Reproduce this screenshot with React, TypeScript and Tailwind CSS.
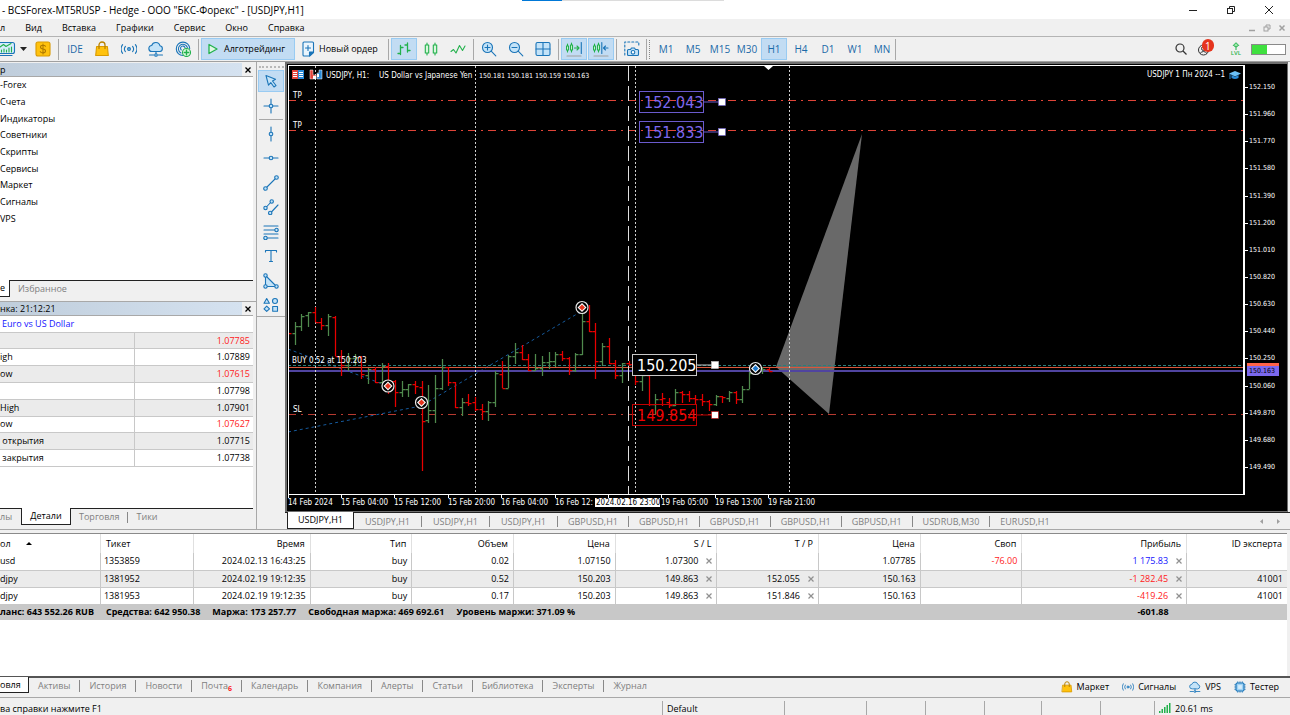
import React from "react";

type IconProps = { children: React.ReactNode; size?: "sm" | "md" };

const blue = "#1b75b8";
const green = "#22b14c";

function Icon({ children, size = "md" }: IconProps) {
  return (
    <svg
      viewBox="0 0 16 16"
      className={size === "md" ? "h-4 w-4 shrink-0" : "h-3 w-3 shrink-0"}
      fill="none"
      stroke={blue}
      strokeWidth="1.1"
      strokeLinecap="round"
      strokeLinejoin="round"
      aria-hidden="true"
    >
      {children}
    </svg>
  );
}

const BagIcon = ({ size }: { size?: "sm" | "md" }) => (
  <Icon size={size}>
    <path d="M2.6 5.5h10.8l.9 9H1.7z" fill="#ffc20e" stroke="#d99a00" />
    <path d="M5 7.5V4a3 3 0 0 1 6 0v3.5" stroke="#b98200" strokeWidth="1.3" />
  </Icon>
);

const SignalIcon = ({ size }: { size?: "sm" | "md" }) => (
  <Icon size={size}>
    <circle cx="8" cy="8" r="1.4" fill="#8fc8f0" />
    <path d="M4.4 5.4a4.2 4.2 0 0 0 0 5.2M11.6 5.4a4.2 4.2 0 0 1 0 5.2M1.600 3.700a7.200 7.200 0 0 0 0 8.600M14.400 3.700a7.200 7.200 0 0 1 0 8.600" />
  </Icon>
);

const CloudIcon = ({ size }: { size?: "sm" | "md" }) => (
  <Icon size={size}>
    <path
      d="M4 10.500a3 3 0 0 1-.3-6A4.300 4.300 0 0 1 12 4.800a2.900 2.900 0 0 1 0 5.700z"
      fill="#c4e3f8"
    />
    <path d="M8 10.500v2M1.500 14h4.300M10.200 14h4.300" />
    <circle cx="8" cy="14" r="1.300" fill="#c4e3f8" />
  </Icon>
);

const ChipIcon = () => (
  <Icon size="sm">
    <path d="M5 1v14M8 1v14M11 1v14M1 5h14M1 8h14M1 11h14" />
    <rect x="2.700" y="2.700" width="10.600" height="10.600" rx="1.500" fill="#9ed2f5" strokeWidth="1.500" />
    <rect x="5.500" y="5.500" width="5" height="5" fill="#d5ecfb" stroke="none" />
  </Icon>
);

function ToolButton({
  label,
  active,
  children,
}: {
  label: string;
  active?: boolean;
  children: React.ReactNode;
}) {
  return (
    <button
      aria-label={label}
      className={
        active
          ? "mr-px flex h-[22px] w-[26px] shrink-0 items-center justify-center border border-[#99cbf2] bg-[#c2dcf3]"
          : "mr-px flex h-[22px] w-[26px] shrink-0 items-center justify-center"
      }
    >
      {children}
    </button>
  );
}

const Sep = () => <span className="h-[21px] w-px shrink-0 bg-[#a8a8a8]" />;

const GroupSep = () => (
  <span className="mr-[2px] ml-px flex">
    <Sep />
  </span>
);

function TitleBar() {
  return (
    <header className="relative flex h-[19px] items-center justify-between bg-white pl-[2px] pr-4">
      <h1 className="text-[10px] leading-4 whitespace-pre">
        - BCSForex-MT5RUSP - Hedge - ООО "БКС-Форекс" - [USDJPY,H1]
      </h1>
      <div className="absolute top-0 left-[522px] flex">
        <span className="h-px w-[40px] bg-[#0078d7]" />
        <span className="h-px w-[162px] bg-[#dcdcdc]" />
      </div>
      <div className="flex items-center gap-7">
        <button aria-label="Свернуть">
          <svg className="h-[10px] w-[10px]" viewBox="0 0 10 10" stroke="#222" aria-hidden="true">
            <path d="M1 5.500h8" />
          </svg>
        </button>
        <button aria-label="Развернуть">
          <svg className="h-[10px] w-[10px]" viewBox="0 0 10 10" stroke="#222" fill="none" aria-hidden="true">
            <rect x="1.500" y="3.500" width="5" height="5" />
            <path d="M3.500 3.500v-2h5v5h-2" />
          </svg>
        </button>
        <button aria-label="Закрыть">
          <svg className="h-[10px] w-[10px]" viewBox="0 0 10 10" stroke="#222" aria-hidden="true">
            <path d="M1 1l8 8M9 1l-8 8" />
          </svg>
        </button>
      </div>
    </header>
  );
}

function MenuBar() {
  const items = ["Вид", "Вставка", "Графики", "Сервис", "Окно", "Справка"];
  return (
    <nav className="flex h-[18px] items-center justify-between border-b border-[#b4b4b4] pr-1">
      <div className="flex items-center gap-5">
        <button>л</button>
        {items.map((t) => (
          <button key={t}>{t}</button>
        ))}
      </div>
      <div className="flex items-center gap-[7px] text-[#a0a0a0]">
        <svg className="h-2 w-2" viewBox="0 0 8 8" stroke="currentColor" aria-hidden="true">
          <path d="M1 6.500h6" strokeWidth="1.500" />
        </svg>
        <svg className="h-2 w-2" viewBox="0 0 8 8" stroke="currentColor" fill="none" aria-hidden="true">
          <rect x="1" y="3" width="4" height="4" />
          <path d="M3 3V1h4v4H5" />
        </svg>
        <svg className="h-2 w-2" viewBox="0 0 8 8" stroke="currentColor" aria-hidden="true">
          <path d="M1.500 1.500l5 5M6.500 1.500l-5 5" strokeWidth="1.500" />
        </svg>
      </div>
    </nav>
  );
}

function Toolbar() {
  const frames = ["M1", "M5", "M15", "M30", "H1", "H4", "D1", "W1", "MN"];
  return (
    <div className="flex h-[25px] items-center border-b border-[#a0a0a0]">
      <button aria-label="Графики" className="flex w-[30px] items-center gap-1">
        <Icon>
          <path d="M-2 1.500h14.500q2 0 2 2v7q0 2-2 2H-2" fill="#d5ecfb" />
          <path d="M0 14.500h12" />
          <path d="M0 6l3.500-2.500 2.500 2 5-3" stroke={green} />
          <path d="M1.500 11V9M4 11V8M6.500 11V9M9 11V7M11.500 11V6" stroke={green} />
        </Icon>
        <svg className="h-1 w-[7px]" viewBox="0 0 7 4" aria-hidden="true">
          <path d="M0 0h7L3.500 4z" fill="#222" />
        </svg>
      </button>
      <ToolButton label="Символы">
        <Icon>
          <rect x="1" y="1" width="14" height="14" rx="2" fill="#ffc20e" stroke="#d99a00" />
          <path d="M10.500 5.200Q9.800 4.200 8 4.200q-2.500 0-2.500 1.900T8 8q2.500.2 2.500 2T8 11.900q-2 0-2.700-1.200M8 3v10" stroke="#b07a00" />
        </Icon>
      </ToolButton>
      <GroupSep />
      <button className="w-7 text-[10px] text-[#1b6aa8]">IDE</button>
      <ToolButton label="Маркет"><BagIcon /></ToolButton>
      <ToolButton label="Сигналы"><SignalIcon /></ToolButton>
      <ToolButton label="VPS"><CloudIcon /></ToolButton>
      <ToolButton label="Сообщество">
        <Icon>
          <path d="M8 14.500A6.700 6.700 0 1 1 14.700 7.500" />
          <path d="M6 12A4.600 4.600 0 1 1 12.400 6.500" />
          <path d="M6.300 9A2.300 2.300 0 1 1 10 6.500" />
          <circle cx="11.500" cy="11.500" r="4" fill="#d9f7dd" stroke={green} />
          <path d="M11.500 9.300v4.400M9.300 11.500h4.400" stroke={green} strokeWidth="1.400" />
        </Icon>
      </ToolButton>
      <GroupSep />
      <button className="flex h-[22px] w-[94px] items-center gap-[3px] border border-[#99cbf2] bg-[#c2dcf3] px-[3px]">
        <Icon size="md">
          <path d="M4 3.500v9L12 8z" fill="#e0f8e4" stroke={green} strokeWidth="1.300" />
        </Icon>
        Алготрейдинг
      </button>
      <button className="flex h-[22px] w-[92px] items-center gap-[3px] px-[5px]">
        <Icon size="md">
          <path d="M4 1h8.500q1 0 1 1v9.500l-4 3.500H4q-1 0-1-1V2q0-1 1-1z" fill="#eaf5fd" />
          <path d="M13.500 11h-4v4z" fill={blue} />
          <path d="M8 4.500v5M5.500 7h5" />
        </Icon>
        Новый ордер
      </button>
      <GroupSep />
      <ToolButton label="Бары" active>
        <Icon>
          <path d="M4.500 4.500v9M2 12.500h2.500M4.500 6.500H7M11.500 2v9M9 4h2.500M11.500 9.500H14" stroke={green} strokeWidth="1.300" />
        </Icon>
      </ToolButton>
      <ToolButton label="Свечи">
        <Icon>
          <path d="M4 2v12M12 2v12" stroke={green} />
          <rect x="2.300" y="4" width="3.400" height="8" fill="#d9f7dd" stroke={green} />
          <rect x="10.300" y="4" width="3.400" height="8" fill="#d9f7dd" stroke={green} />
        </Icon>
      </ToolButton>
      <ToolButton label="Линия">
        <Icon>
          <path d="M1 10.500l2.500-2 2.500 3.500 3.500-7.500 3 5L15 5" stroke={green} />
        </Icon>
      </ToolButton>
      <GroupSep />
      <ToolButton label="Увеличить">
        <Icon>
          <circle cx="6.500" cy="6.500" r="5" fill="#c4e3f8" />
          <path d="M10.200 10.200l4.600 4.600M4 6.500h5M6.500 4v5" />
        </Icon>
      </ToolButton>
      <ToolButton label="Уменьшить">
        <Icon>
          <circle cx="6.500" cy="6.500" r="5" fill="#c4e3f8" />
          <path d="M10.200 10.200l4.600 4.600M4 6.500h5" />
        </Icon>
      </ToolButton>
      <ToolButton label="Окна">
        <Icon>
          <rect x="1" y="1.500" width="14" height="13" rx="1.500" fill="#c4e3f8" />
          <path d="M8 1.500v13M1 8h14" />
        </Icon>
      </ToolButton>
      <GroupSep />
      <ToolButton label="Автопрокрутка" active>
        <Icon>
          <path d="M1.500 3v8M5.500 2v9" stroke={green} />
          <path d="M.5 5h2v4h-2zM4.500 4h2v5h-2z" fill="#d9f7dd" stroke={green} />
          <path d="M8.500 7H13M11 5l2 2-2 2" stroke={green} />
          <path d="M15.300 1.500v11" />
          <path d="M1 15h14" stroke="#a0a0a0" />
        </Icon>
      </ToolButton>
      <ToolButton label="Сдвиг графика" active>
        <Icon>
          <path d="M1.500 3v8M5.500 2v9" stroke={green} />
          <path d="M.5 5h2v4h-2zM4.500 4h2v5h-2z" fill="#d9f7dd" stroke={green} />
          <path d="M8.800 1.500v11M15 7h-4.500M12.500 5l-2 2 2 2" />
          <path d="M1 15h14" stroke="#a0a0a0" />
        </Icon>
      </ToolButton>
      <GroupSep />
      <ToolButton label="Скриншот">
        <Icon>
          <path d="M.8 14V1h14v5" strokeDasharray="2 2" />
          <path d="M4.500 8.500h2L7.500 7h3l1 1.500h2q1 0 1 1v4q0 1-1 1h-9q-1 0-1-1v-4q0-1 1-1z" fill="#c4e3f8" />
          <circle cx="9" cy="11.300" r="1.800" fill="#fff" />
        </Icon>
      </ToolButton>
      <Sep />
      <span className="mx-[2px] h-[19px] border-l border-dotted border-[#888]" />
      <div className="ml-px flex gap-px text-[10px] text-[#1b6aa8]">
        {frames.map((f) =>
          f === "H1" ? (
            <button key={f} className="h-[22px] w-[26px] border border-[#99cbf2] bg-[#c2dcf3]">
              {f}
            </button>
          ) : (
            <button key={f} className="h-[22px] w-[26px]">
              {f}
            </button>
          ),
        )}
      </div>
      <Sep />
      <div className="ml-auto flex items-center gap-[10px] pr-1">
        <button aria-label="Поиск">
          <svg className="h-3 w-3" viewBox="0 0 12 12" fill="none" stroke="#333" strokeWidth="1.200" aria-hidden="true">
            <circle cx="5" cy="5" r="4" />
            <path d="M8 8l3.500 3.500" />
          </svg>
        </button>
        <button aria-label="Профиль" className="relative mr-2 h-4 w-4">
          <svg className="h-4 w-4" viewBox="0 0 16 16" fill="none" stroke="#333" aria-hidden="true">
            <circle cx="6.500" cy="9" r="5" />
            <circle cx="6.500" cy="7.500" r="2" />
            <path d="M3 12.500q3.500-4 7 0" />
          </svg>
          <span className="absolute -top-[2px] left-[5px] flex h-[13px] w-3 items-center justify-center rounded-full bg-[#e5341d] text-[10px] leading-3 text-white">
            1
          </span>
        </button>
        <button aria-label="Уровень" className="flex flex-col items-center text-[#28b44a]">
          <svg className="h-2 w-2" viewBox="0 0 8 8" fill="#9be8a8" stroke={green} aria-hidden="true">
            <path d="M4 .7l2.700 2.700L4 5 1.300 3.400zM4 5v3" />
          </svg>
          <span className="text-[6px] leading-[6px] font-semibold">LVL</span>
        </button>
        <span className="flex h-[11px] w-[35px] border border-[#8a8a8a] bg-white">
          <span className="h-full w-[15px] bg-[#3fe03f]" />
        </span>
      </div>
    </div>
  );
}

function PanelHeader({ title }: { title: string }) {
  return (
    <div className="mr-[3px] flex h-[14px] items-center justify-between border-b border-[#a8a8a8]">
      <h2 className="h-full flex-1 bg-gradient-to-r from-[#bfcddb] to-[#d5e2f0] leading-[13px]">{title}</h2>
      <button aria-label="Закрыть панель" className="flex w-[11px] justify-center bg-[#f0f0f0]">
        <svg className="h-[6px] w-[6px]" viewBox="0 0 6 6" stroke="#000" strokeWidth="1.300" aria-hidden="true">
          <path d="M.5.5l5 5M5.500.5l-5 5" />
        </svg>
      </button>
    </div>
  );
}

function Navigator() {
  const items = ["-Forex", "Счета", "Индикаторы", "Советники", "Скрипты", "Сервисы", "Маркет", "Сигналы", "VPS"];
  return (
    <section className="flex h-[240px] flex-col border-b border-[#a8a8a8] pt-px">
      <PanelHeader title="р" />
      <div className="mr-[3px] flex-1 bg-white">
        <ul className="grid h-[150px] auto-rows-fr items-center">
          {items.map((t) => (
            <li key={t} className="leading-4">
              {t}
            </li>
          ))}
        </ul>
      </div>
      <div className="mr-[3px] flex h-[21px] items-start border-t border-[#222]">
        <button className="-mt-px flex h-[17px] w-[10px] items-center border-r border-b border-[#222] bg-white">е</button>
        <button className="pl-2 leading-4 text-[#808080]">Избранное</button>
      </div>
    </section>
  );
}

function MarketWatch() {
  const rows: [string, string, boolean][] = [
    ["", "1.07785", true],
    ["igh", "1.07889", false],
    ["ow", "1.07615", true],
    ["", "1.07798", false],
    ["High", "1.07901", false],
    ["ow", "1.07627", true],
    [" открытия", "1.07715", false],
    [" закрытия", "1.07738", false],
  ];
  return (
    <section className="flex flex-1 flex-col">
      <PanelHeader title="нка: 21:12:21" />
      <div className="mr-[3px] flex-1 bg-white">
        <table className="h-[151px] w-full table-fixed border-collapse leading-3">
          <colgroup>
            <col className="w-[134px]" />
            <col />
          </colgroup>
          <tbody>
            <tr>
              <th colSpan={2} className="pl-[2px] text-left font-normal text-[#1414ff]">
                Euro vs US Dollar
              </th>
            </tr>
            {rows.map(([name, value, down], i) => (
              <tr key={i} className="border-y border-[#c8c8c8] odd:bg-white even:bg-[#ebebeb]">
                <td className="border-r border-[#c8c8c8] whitespace-pre">{name}</td>
                <td className={down ? "pr-[3px] text-right text-[#ff1a1a]" : "pr-[3px] text-right"}>{value}</td>
              </tr>
            ))}
          </tbody>
        </table>
      </div>
      <div className="mr-[3px] flex h-[21px] items-start border-t border-[#222] text-[#808080]">
        <button className="w-[21px] text-left leading-4">лы</button>
        <button className="-mt-px flex h-[17px] w-[50px] items-center justify-center border-r border-b border-l border-[#222] bg-white text-black">
          Детали
        </button>
        <button className="px-2 leading-4">Торговля</button>
        <span className="mt-[3px] h-[11px] w-px bg-[#888]" />
        <button className="px-2 leading-4">Тики</button>
      </div>
    </section>
  );
}

function DrawTools() {
  const dot = "#c4e3f8";
  return (
    <aside className="flex w-[28px] shrink-0 flex-col items-center">
      <div className="flex h-[255px] w-full flex-col items-center justify-between border-b border-[#a8a8a8] pt-1">
        <span className="w-[25px] border-t-2 border-dotted border-[#b8b8b8]" />
        <ToolButton label="Курсор" active>
          <Icon>
            <path d="M3 2.500l9.500 3.800-3 1.700 3.500 4.500-2 1.500-3.200-4.300-2.300 2.500z" fill={dot} />
          </Icon>
        </ToolButton>
        <ToolButton label="Перекрестие">
          <Icon>
            <path d="M8 1v14M1 8h14" />
            <circle cx="8" cy="8" r="1.800" fill={dot} />
          </Icon>
        </ToolButton>
        <span className="h-px w-6 bg-[#a8a8a8]" />
        <ToolButton label="Вертикальная линия">
          <Icon>
            <path d="M8 1v14" />
            <circle cx="8" cy="8" r="1.800" fill={dot} />
          </Icon>
        </ToolButton>
        <ToolButton label="Горизонтальная линия">
          <Icon>
            <path d="M1 8h14" />
            <circle cx="8" cy="8" r="1.800" fill={dot} />
          </Icon>
        </ToolButton>
        <ToolButton label="Трендовая линия">
          <Icon>
            <path d="M2.500 13.500l11-11" />
            <circle cx="2.500" cy="13.500" r="1.800" fill={dot} />
            <circle cx="13.500" cy="2.500" r="1.800" fill={dot} />
          </Icon>
        </ToolButton>
        <ToolButton label="Канал">
          <Icon>
            <path d="M2.500 9l6-6.500M7.500 14l7.500-8" />
            <circle cx="2.500" cy="9" r="1.700" fill={dot} />
            <circle cx="8.700" cy="2.500" r="1.700" fill={dot} />
            <circle cx="7.200" cy="14" r="1.700" fill={dot} />
          </Icon>
        </ToolButton>
        <ToolButton label="Фибоначчи">
          <Icon>
            <path d="M1 2h14M1 6h14M1 10h14M1 14h14" />
            <circle cx="13.500" cy="6" r="1.700" fill={dot} />
            <circle cx="2.500" cy="14" r="1.700" fill={dot} />
          </Icon>
        </ToolButton>
        <ToolButton label="Текст">
          <Icon>
            <path d="M2.500 4V2.500h11V4M8 2.500v11M6.500 13.500h3" />
          </Icon>
        </ToolButton>
        <ToolButton label="Фигуры">
          <Icon>
            <path d="M2.500 2.500v11h11z" fill={dot} />
            <circle cx="2.500" cy="2.500" r="1.700" fill={dot} />
            <circle cx="2.500" cy="13.500" r="1.700" fill={dot} />
            <circle cx="13.500" cy="13.500" r="1.700" fill={dot} />
          </Icon>
        </ToolButton>
        <ToolButton label="Объекты">
          <Icon>
            <path d="M3.700 1.500l2.700 4.700H1z" fill={dot} />
            <circle cx="12" cy="4" r="2.500" fill={dot} />
            <path d="M3.700 9.200l2.800 2.600-2.800 2.600L1 11.800z" fill={dot} />
            <rect x="9.700" y="9.500" width="4.800" height="4.800" fill={dot} />
          </Icon>
        </ToolButton>
      </div>
    </aside>
  );
}

/* Each bar: direction, high, low, open, close; heights are thirds of a pixel below the bar area's top. */
const bars: ["u" | "d", number, number, number, number][] = [
  ["d", 115, 117, 115, 115], ["u", 80, 150, 115, 93], ["u", 57, 108, 93, 62], ["u", 50, 95, 60, 52],
  ["d", 35, 82, 52, 80], ["d", 70, 105, 80, 90], ["u", 57, 123, 90, 62], ["d", 62, 184, 65, 182],
  ["d", 165, 243, 182, 210], ["u", 175, 228, 210, 190], ["u", 178, 210, 190, 187], ["d", 183, 252, 187, 238],
  ["u", 218, 268, 240, 222], ["d", 215, 265, 222, 262], ["u", 205, 280, 262, 213], ["d", 205, 298, 213, 262],
  ["d", 255, 335, 258, 290], ["u", 258, 305, 290, 283], ["u", 267, 305, 283, 268], ["d", 258, 297, 268, 273],
  ["d", 258, 528, 275, 378], ["u", 270, 383, 376, 345], ["u", 240, 383, 345, 278], ["u", 193, 285, 278, 215],
  ["d", 215, 272, 216, 262], ["d", 262, 340, 262, 335], ["u", 308, 362, 335, 320], ["d", 297, 333, 320, 323],
  ["d", 305, 347, 322, 343], ["d", 328, 375, 343, 348], ["u", 317, 378, 348, 320], ["u", 228, 335, 320, 235],
  ["d", 198, 280, 236, 278], ["u", 180, 280, 278, 183], ["u", 143, 207, 183, 170], ["d", 150, 195, 170, 193],
  ["d", 177, 227, 193, 225], ["u", 177, 228, 225, 220], ["u", 183, 243, 220, 200], ["u", 170, 222, 200, 197],
  ["u", 172, 215, 197, 178], ["d", 168, 197, 178, 190], ["d", 187, 240, 190, 225], ["u", 173, 230, 225, 178],
  ["u", 45, 180, 178, 78], ["d", 30, 110, 78, 108], ["d", 85, 253, 108, 197], ["u", 145, 213, 198, 153],
  ["d", 130, 207, 153, 205], ["d", 195, 253, 205, 240], ["u", 203, 265, 240, 205], ["d", 198, 212, 205, 208],
  ["d", 208, 270, 210, 257], ["u", 240, 287, 257, 240], ["d", 235, 333, 240, 328], ["u", 297, 357, 328, 313],
  ["d", 295, 332, 313, 310], ["d", 310, 340, 320, 330], ["u", 283, 332, 330, 290], ["d", 288, 325, 290, 298],
  ["d", 288, 322, 298, 308], ["d", 300, 330, 310, 312], ["d", 298, 333, 312, 318], ["d", 315, 348, 318, 328],
  ["u", 300, 332, 328, 303], ["d", 302, 325, 303, 305], ["u", 288, 322, 310, 290], ["d", 287, 328, 290, 313],
  ["u", 272, 323, 313, 282], ["u", 230, 283, 282, 235], ["u", 215, 238, 235, 220], ["u", 215, 238, 220, 222],
  ["d", 220, 230, 222, 228],
];

const barY = (v: number) => Math.round(295 + v / 3);

function Bars() {
  return (
    <g strokeWidth="1.25" fill="none">
      {bars.map(([dir, h, l, o, c], i) => {
        const x = Math.round(288 + i * 6.68) + 0.5;
        return (
          <path
            key={i}
            stroke={dir === "u" ? "#4f8a4d" : "#e80000"}
            d={`M${x} ${barY(h)}V${barY(l)}M${x - 3} ${barY(o) + 0.5}H${x}M${x} ${barY(c) + 0.5}H${x + 3}`}
          />
        );
      })}
    </g>
  );
}

function DealMark({ x, y, color }: { x: number; y: number; color: string }) {
  return (
    <g>
      <circle cx={x} cy={y} r="6" fill="#000" stroke="#e8e8e8" strokeWidth="1.2" />
      <path d={`M${x} ${y - 4.5}l4.5 4.500-4.500 4.500-4.500-4.500z`} fill="#fff" />
      <path d={`M${x} ${y - 3}l3 3-3 3-3-3z`} fill={color} />
    </g>
  );
}

function PriceLabel({
  x,
  y,
  color,
  border,
  text,
  handle,
  fill,
}: {
  x: number;
  y: number;
  color: string;
  border: string;
  text: string;
  handle: number;
  fill?: string;
}) {
  return (
    <g>
      <rect x={x + 0.5} y={y - 10.5} width="64" height="21" fill={fill ?? "none"} stroke={border} />
      <text x={x + 5} y={y + 6} fontSize="16" fill={color}>
        {text}
      </text>
      <path d={`M${x + 65} ${y}H${handle - 3}`} stroke={border} />
      <rect x={handle - 3.5} y={y - 3.5} width="7" height="7" fill="#fff" stroke={border} strokeWidth=".6" />
    </g>
  );
}

function Plot() {
  const times: [number, string][] = [
    [288, "14 Feb 2024"], [341, "15 Feb 04:00"], [394, "15 Feb 12:00"], [448, "15 Feb 20:00"],
    [501, "16 Feb 04:00"], [555, "16 Feb 12:"], [661, "19 Feb 05:00"], [715, "19 Feb 13:00"], [768, "19 Feb 21:00"],
  ];
  const stops = [100, 130, 414];
  return (
    <svg className="block h-[445px] w-full" fontFamily="'DejaVu Sans Condensed', 'DejaVu Sans', sans-serif" role="img" aria-label="USDJPY, H1">
      <g transform="translate(-288 -65)">
        <path d="M776 367L862 134 829 414z" fill="#696969" />
        <g fill="none" stroke="#165a9c" strokeDasharray="3 3">
          <path d="M288 349L388 386M288 432L421 406 582 311" />
        </g>
        <g shapeRendering="crispEdges" fill="none">
          {stops.map((y) => (
            <path key={y} d={`M288 ${y + 0.5}H4000`} stroke={y === 414 ? "#b83a30" : "#e04438"} strokeDasharray="8 5 2 5" />
          ))}
          <path d="M288 365.500H4000" stroke="#2a7f78" strokeDasharray="3 2" />
          <path d="M288 367.500H4000" stroke="#d9583c" />
          <path d="M288 371H4000" stroke="#5044a0" strokeWidth="2" />
          <path d="M315.500 66V494M475.500 66V494M635.500 66V494M789.500 66V494" stroke="#d0d0d0" strokeDasharray="2 2" />
          <path d="M628.500 66V494" stroke="#e0e0e0" strokeDasharray="15 5" />
        </g>
        <Bars />
        <g fontSize="8" fill="#fff">
          <text x="293" y="98">TP</text>
          <text x="293" y="128">TP</text>
          <text x="292" y="363">BUY 0.52 at 150.203</text>
          <text x="293" y="412">SL</text>
          <text x="326" y="78">USDJPY, H1:</text>
          <text x="379" y="78">US Dollar vs Japanese Yen</text>
          <text x="479" y="78" fontSize="7">150.181 150.181 150.159 150.163</text>
        </g>
        <DealMark x={388} y={386} color="#e5341d" />
        <DealMark x={421.5} y={402.5} color="#e5341d" />
        <DealMark x={582} y={307.5} color="#e5341d" />
        <DealMark x={755.5} y={368.5} color="#1b75c8" />
        <PriceLabel x={639} y={102} handle={722} color="#7b68ee" border="#6a5acd" text="152.043" />
        <PriceLabel x={639} y={132} handle={722} color="#7b68ee" border="#6a5acd" text="151.833" />
        <PriceLabel x={632} y={365} handle={715} color="#fff" border="#c8c8c8" text="150.205" fill="#000" />
        <PriceLabel x={632} y={415} handle={715} color="#f00000" border="#c00000" text="149.854" />
        <g>
          <rect x="292" y="70" width="6" height="9" fill="#e5443a" />
          <rect x="298" y="70" width="6" height="9" fill="#2a8ad6" />
          <path d="M293 72.500h4M293 74.500h4M293 76.500h4M299 72.500h4M299 74.500h4M299 76.500h4" stroke="#fff" />
          <path d="M310 70h3v5h3v4h-6z" fill="#e5443a" stroke="#fff" strokeWidth=".5" />
          <path d="M322 70h-3v3h-2v6h5z" fill="#2a8ad6" stroke="#fff" strokeWidth=".5" />
          <path d="M313 76h3v3h-3zM317 74h2v3h-2z" fill="#fff" />
        </g>
        <path d="M764 66h9l-4.500 4z" fill="#fff" />
        <path d="M288 494.500H4000" stroke="#fff" shapeRendering="crispEdges" />
        <g fontSize="8" fill="#fff">
          {times.map(([x, t]) => (
            <g key={x}>
              <path d={`M${x + 0.5} 495v3`} stroke="#fff" />
              <text x={x} y="505">
                {t}
              </text>
            </g>
          ))}
          <path d="M608.500 495v3" stroke="#fff" />
          <rect x="595" y="498" width="65" height="9" fill="#fff" />
          <text x="596" y="505" fill="#000">
            2024.02.16 23:00
          </text>
        </g>
      </g>
    </svg>
  );
}

function Chart() {
  const prices = [
    "152.150", "151.960", "151.770", "151.580", "151.390", "151.200", "151.010", "150.820",
    "150.630", "150.440", "150.250", "150.060", "149.870", "149.680", "149.490",
  ];
  return (
    <div className="mr-[2px] flex flex-1 border-t-2 border-l-2 border-r border-b border-[#6e6e6e] bg-black pt-px pl-px font-['DejaVu_Sans_Condensed','DejaVu_Sans',sans-serif] text-[7px] text-white">
      <div className="relative min-w-0 flex-1">
        <div className="overflow-hidden">
          <Plot />
        </div>
        <div className="pointer-events-none absolute inset-x-0 top-0 h-[430px] border-t border-r-2 border-l border-white" />
        <div className="absolute top-1 right-1 flex items-center gap-1 text-[8px] leading-3">
          USDJPY 1 Пн 2024 --1
          <svg className="h-[10px] w-3" viewBox="0 0 12 10" aria-hidden="true">
            <path d="M6 1l6 2.500L6 6.500 0 3.500z" fill="#6cc0f5" />
            <path d="M2.500 5v3Q6 10 9.500 8V5L6 6.800z" fill="#2a8ad6" />
            <path d="M1 4v5" stroke="#2a8ad6" />
          </svg>
        </div>
      </div>
      <div className="relative w-[42px] shrink-0 pt-[9px]">
        <ul className="grid h-[407px] auto-rows-fr items-center">
          {prices.map((p) => (
            <li key={p} className="flex items-center gap-px leading-[9px]">
              <span className="h-px w-[3px] bg-white" />
              {p}
            </li>
          ))}
        </ul>
        <div className="absolute top-[298px] left-[2px] h-[13px] w-8 overflow-hidden bg-[#ff6347] text-black">
          <span className="mt-[3px] block bg-[#7b68ee] pl-[2px] leading-[10px]">150.163</span>
        </div>
      </div>
    </div>
  );
}

function ChartTabs() {
  const tabs = ["USDJPY,H1", "USDJPY,H1", "USDJPY,H1", "GBPUSD,H1", "GBPUSD,H1", "GBPUSD,H1", "GBPUSD,H1", "GBPUSD,H1", "USDRUB,M30", "EURUSD,H1"];
  return (
    <div className="flex h-[17px] items-start border-t border-[#222] pl-[2px] text-[#808080]">
      <button className="-mt-px flex h-[17px] w-[67px] items-center justify-center border border-t-0 border-[#222] bg-white text-black">
        USDJPY,H1
      </button>
      {tabs.map((t, i) => (
        <React.Fragment key={i}>
          {i > 0 && <span className="mt-[3px] h-[11px] w-px bg-[#888]" />}
          <button className="min-w-[67px] px-[10px] leading-[17px]">{t}</button>
        </React.Fragment>
      ))}
      <div className="ml-auto flex h-full items-center gap-3 pr-[10px]">
        <button aria-label="Назад">
          <svg className="h-[5px] w-1" viewBox="0 0 4 5" fill="#a0a0a0" aria-hidden="true"><path d="M3 0v5L0 2.500z" /></svg>
        </button>
        <button aria-label="Вперёд">
          <svg className="h-[5px] w-1" viewBox="0 0 4 5" fill="#a0a0a0" aria-hidden="true"><path d="M1 0v5l3-2.500z" /></svg>
        </button>
      </div>
    </div>
  );
}

function Cross() {
  return (
    <button aria-label="Удалить" className="ml-2 inline-block align-baseline">
      <svg className="h-[6px] w-[6px]" viewBox="0 0 6 6" stroke="#909090" strokeWidth="1.200" aria-hidden="true">
        <path d="M.5.5l5 5M5.500.5l-5 5" />
      </svg>
    </button>
  );
}

function Trades() {
  const rows = [
    ["usd", "1353859", "2024.02.13 16:43:25", "buy", "0.02", "1.07150", "1.07300", "", "1.07785", "-76.00", "1 175.83", ""],
    ["djpy", "1381952", "2024.02.19 19:12:35", "buy", "0.52", "150.203", "149.863", "152.055", "150.163", "", "-1 282.45", "41001"],
    ["djpy", "1381953", "2024.02.19 19:12:35", "buy", "0.17", "150.203", "149.863", "151.846", "150.163", "", "-419.26", "41001"],
  ];
  const heads = ["Тикет", "Время", "Тип", "Объем", "Цена", "S / L", "T / P", "Цена", "Своп", "Прибыль", "ID эксперта"];
  const totals = [
    "ланс: 643 552.26 RUB",
    "Средства: 642 950.38",
    "Маржа: 173 257.77",
    "Свободная маржа: 469 692.61",
    "Уровень маржи: 371.09 %",
  ];
  return (
    <table className="w-full table-fixed border-collapse leading-3">
      <colgroup>
        <col className="w-[7.8%]" />
        <col className="w-[7.2%]" />
        <col className="w-[9.1%]" />
        <col className="w-[7.9%]" />
        <col className="w-[7.9%]" />
        <col className="w-[7.9%]" />
        <col className="w-[7.9%]" />
        <col className="w-[7.9%]" />
        <col className="w-[7.9%]" />
        <col className="w-[7.9%]" />
        <col className="w-[12.8%]" />
        <col />
      </colgroup>
      <thead>
        <tr className="h-[19px]">
          <th className="border-r border-[#e0e0e0] text-left font-normal">
            <span className="flex items-center gap-[15px]">
              ол
              <svg className="h-[3px] w-[6px]" viewBox="0 0 6 3" aria-hidden="true"><path d="M0 3h6L3 0z" /></svg>
            </span>
          </th>
          {heads.map((h, i) => (
            <th
              key={i}
              className={
                i === 0
                  ? "border-r border-[#e0e0e0] pl-[5px] text-left font-normal"
                  : i === 10
                    ? "pr-[5px] text-right font-normal"
                    : "border-r border-[#e0e0e0] pr-[5px] text-right font-normal"
              }
            >
              {h}
            </th>
          ))}
        </tr>
      </thead>
      <tbody>
        {rows.map((r, i) => (
          <tr key={i} className="h-[17px] border-b border-[#c8c8c8] odd:bg-white even:bg-[#ebebeb]">
            {r.map((v, j) => (
              <td
                key={j}
                className={
                  j === 0
                    ? "border-r border-[#c8c8c8]"
                    : j === 1
                      ? "border-r border-[#c8c8c8] pl-[3px]"
                      : j === 11
                        ? "pr-1 text-right"
                        : "border-r border-[#c8c8c8] pr-1 text-right"
                }
              >
                <span
                  className={
                    v.startsWith("-") ? "text-[#ff1a1a]" : j === 10 ? "text-[#1414ff]" : "text-black"
                  }
                >
                  {v}
                </span>
                {v !== "" && (j === 6 || j === 7 || j === 10) && <Cross />}
              </td>
            ))}
          </tr>
        ))}
      </tbody>
      <tfoot>
        <tr className="h-4 bg-[#c8c8c8] font-bold">
          <td colSpan={10}>
            <span className="flex gap-3">
              {totals.map((t) => (
                <span key={t}>{t}</span>
              ))}
            </span>
          </td>
          <td className="pr-[18px] text-right">-601.88</td>
          <td />
        </tr>
      </tfoot>
    </table>
  );
}

function Toolbox() {
  const tabs = ["Активы", "История", "Новости", "Почта", "Календарь", "Компания", "Алерты", "Статьи", "Библиотека", "Эксперты", "Журнал"];
  return (
    <section className="border-t border-[#a8a8a8] pt-[3px]">
      <div className="mr-[3px] h-[143px] border-t border-[#8a8a8a] bg-white">
        <Trades />
      </div>
      <div className="flex h-[21px] items-start justify-between border-t-2 border-[#555] pr-[11px]">
        <div className="flex items-start text-[#808080]">
          <button className="-mt-px flex h-4 w-[29px] items-center border-r border-b border-[#222] bg-white text-black">овля</button>
          {tabs.map((t, i) => (
            <React.Fragment key={t}>
              {i > 0 && <span className="mt-[2px] h-[12px] w-px bg-[#888]" />}
              <button className="flex px-[9px] leading-4">
                {t}
                {t === "Почта" && <span className="pt-[3px] text-[7px] font-bold text-[#ff1a1a]">6</span>}
              </button>
            </React.Fragment>
          ))}
        </div>
        <div className="flex gap-[13px] pt-px leading-4">
          <button className="flex items-center gap-1"><BagIcon size="sm" />Маркет</button>
          <button className="flex items-center gap-1"><SignalIcon size="sm" />Сигналы</button>
          <button className="flex items-center gap-1"><CloudIcon size="sm" />VPS</button>
          <button className="flex items-center gap-1"><ChipIcon />Тестер</button>
        </div>
      </div>
    </section>
  );
}

function StatusBar() {
  return (
    <footer className="flex h-[18px] border-t border-[#a8a8a8] pt-[3px] leading-[15px]">
      <span className="flex-1">ва справки нажмите F1</span>
      <span className="w-[122px] border-l border-[#a8a8a8] pl-1">Default</span>
      <span className="w-[82px] border-l border-[#a8a8a8]" />
      <span className="w-[59px] border-l border-[#a8a8a8]" />
      <span className="w-[59px] border-l border-[#a8a8a8]" />
      <span className="w-[57px] border-l border-[#a8a8a8]" />
      <span className="w-[59px] border-l border-[#a8a8a8]" />
      <span className="w-[54px] border-l border-[#a8a8a8]" />
      <span className="flex w-[136px] items-center gap-1 border-l border-[#a8a8a8] pl-1">
        <svg className="h-[10px] w-3" viewBox="0 0 12 10" fill={green} aria-hidden="true">
          <path d="M0 8h1.500v2H0zM2.500 6H4v4H2.500zM5 4h1.500v6H5zM7.500 2H9v8H7.500zM10 0h1.500v10H10z" />
        </svg>
        20.61 ms
      </span>
    </footer>
  );
}

export default function App() {
  return (
    <div className="flex min-h-screen flex-col overflow-hidden bg-[#f0f0f0] font-['Open_Sans','Noto_Sans',sans-serif] text-[9px] whitespace-nowrap text-black">
      <TitleBar />
      <MenuBar />
      <Toolbar />
      <main className="flex flex-1">
        <div className="flex w-[257px] shrink-0 flex-col border-r border-[#a8a8a8]">
          <Navigator />
          <MarketWatch />
        </div>
        <DrawTools />
        <div className="flex min-w-0 flex-1 flex-col">
          <Chart />
          <ChartTabs />
        </div>
      </main>
      <Toolbox />
      <StatusBar />
    </div>
  );
}
